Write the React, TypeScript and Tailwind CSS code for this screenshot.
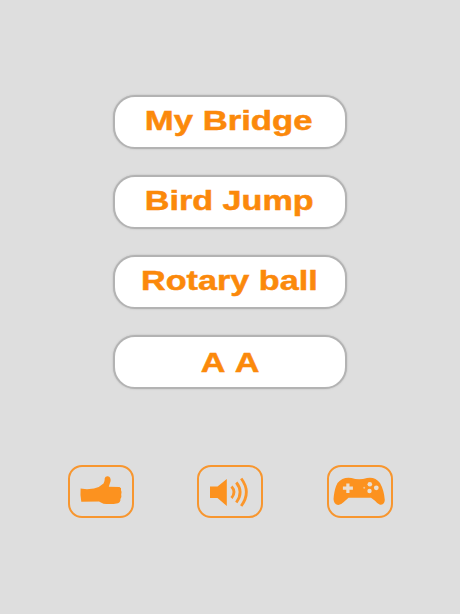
import type { ReactNode } from "react";

interface MenuButtonProps {
  label: string;
  textClass: string;
}

const MenuButton = ({ label, textClass }: MenuButtonProps) => {
  return (
    <button className="flex h-[54px] w-[234px] items-center justify-center rounded-[22px] border-2 border-[#b3b3b3] bg-white shadow-[0_0_2px_#b8b8b8]">
      <span
        className={`inline-block whitespace-pre font-['Liberation_Sans',sans-serif] text-[28px] font-bold leading-none text-[#fb890b] [-webkit-text-stroke:0.5px_#fb890b] ${textClass}`}
      >
        {label}
      </span>
    </button>
  );
};

interface IconButtonProps {
  label: string;
  children: ReactNode;
}

const IconButton = ({ label, children }: IconButtonProps) => {
  return (
    <button
      aria-label={label}
      className="h-[53px] w-[66px] rounded-[14px] border-2 border-[#f7962f]"
    >
      <svg viewBox="2 2 62 49" className="h-[49px] w-[62px]" fill="#fc921f">
        {children}
      </svg>
    </button>
  );
};

const ThumbIcon = () => (
  <path d="M12.6 23.5 L19 24.3 L26 23.6 Q32 22 35.5 18.5 Q36.8 16.5 36.8 13 Q37.5 11 39.8 11.2 Q43 12 42.6 16 L40.8 21.8 L51.5 22 Q53.8 23 53 25.3 Q54.3 27.5 53.2 29.5 Q54 32 52.4 34 Q52.8 37 50 38.2 Q43 39.6 35.5 38.7 L31 36.6 L13.3 36.7 Q12 30 12.6 23.5 Z" />
);

const SpeakerIcon = () => (
  <>
    <path d="M13 21.5 H20.5 L29.8 14 V41 L20.5 33 H13 Z" />
    <g fill="none" stroke="#fb962b" strokeWidth="2.8">
      <path d="M34.5 21.5 Q39.5 27 34.5 33" />
      <path d="M39.3 17.5 Q47 27 39.3 37.5" />
      <path d="M44.2 13.5 Q54.5 27 44.2 41" />
    </g>
  </>
);

const GamepadIcon = () => (
  <>
    <path d="M10.5 18 Q16 11.5 24.5 13 Q32 15.5 40 13 Q48 11.5 53 18 Q57 25 57.8 35 Q57.5 40 53 39.8 Q50.5 39 48 35.8 L44 32.8 H21.5 L16.5 37.3 Q12.5 41.3 9 39.3 Q5.8 37 6.8 31 Q7.8 23 10.5 18 Z" />
    <g fill="#eadfd2">
      <path d="M19.3 18.5 h3.2 v3 h3.4 v3.2 h-3.4 v3.3 h-3.2 v-3.3 h-3.4 v-3.2 h3.4 Z" />
      <circle cx="42.8" cy="19.3" r="2.3" />
      <circle cx="42.5" cy="26" r="2.2" />
      <circle cx="49.3" cy="22.8" r="2.4" />
    </g>
    <circle cx="37.2" cy="22.7" r="1" fill="#f6c48c" />
  </>
);

const App = () => {
  return (
    <main className="flex h-[614px] w-[460px] flex-col items-center bg-[#dedede] pt-[95px]">
      <div className="flex flex-col gap-[26px]">
        <MenuButton label="My Bridge" textClass="-mt-0.5 -translate-x-px scale-x-[1.24]" />
        <MenuButton label="Bird Jump" textClass="-mt-0.5 -translate-x-px scale-x-[1.22]" />
        <MenuButton label="Rotary ball" textClass="-mt-0.5 -translate-x-px scale-x-[1.22]" />
        <MenuButton label="A A" textClass="mt-0.5 scale-x-[1.22] [word-spacing:2px]" />
      </div>
      <div className="mt-[76px] flex gap-[63.5px]">
        <IconButton label="Like">
          <ThumbIcon />
        </IconButton>
        <IconButton label="Sound">
          <SpeakerIcon />
        </IconButton>
        <IconButton label="More games">
          <GamepadIcon />
        </IconButton>
      </div>
    </main>
  );
};

export default App;
